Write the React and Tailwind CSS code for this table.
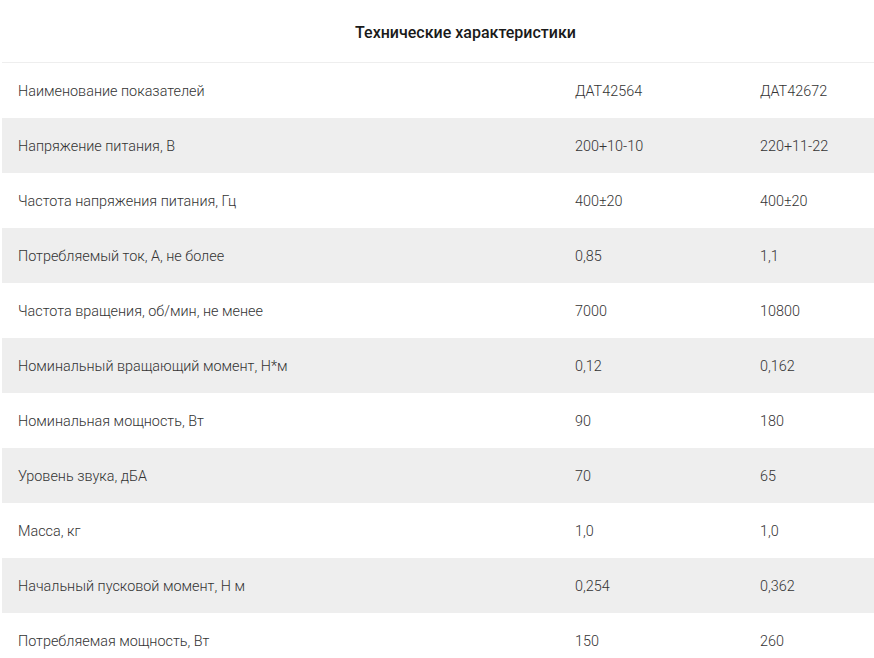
const rows = [
  ["Наименование показателей", "ДАТ42564", "ДАТ42672"],
  ["Напряжение питания, В", "200+10-10", "220+11-22"],
  ["Частота напряжения питания, Гц", "400±20", "400±20"],
  ["Потребляемый ток, А, не более", "0,85", "1,1"],
  ["Частота вращения, об/мин, не менее", "7000", "10800"],
  ["Номинальный вращающий момент, Н*м", "0,12", "0,162"],
  ["Номинальная мощность, Вт", "90", "180"],
  ["Уровень звука, дБА", "70", "65"],
  ["Масса, кг", "1,0", "1,0"],
  ["Начальный пусковой момент, Н м", "0,254", "0,362"],
  ["Потребляемая мощность, Вт", "150", "260"],
];

export default function App() {
  return (
    <div className="w-[874px] h-[658px] overflow-hidden bg-white font-['Roboto',sans-serif]">
      <div className="ml-[2px] w-[927px]">
        {/* Title */}
        <div className="h-[62px] pt-[3px] flex items-center justify-center">
          <h2 className="text-[16px] font-medium text-[#1a1a1a]">Технические характеристики</h2>
        </div>

        {/* Specs table */}
        <div className="border-t border-[#eeeeee]">
          {rows.map((row, i) => (
            <div
              key={i}
              className={`grid grid-cols-[557px_185px_1fr] h-[55px] pt-[2px] items-center text-[14.4px] font-light text-[#333] ${
                i % 2 === 1 ? "bg-[#eeeeee]" : "bg-white"
              }`}
            >
              <div className="pl-4">{row[0]}</div>
              <div className="pl-4">{row[1]}</div>
              <div className="pl-4">{row[2]}</div>
            </div>
          ))}
        </div>
      </div>
    </div>
  );
}
